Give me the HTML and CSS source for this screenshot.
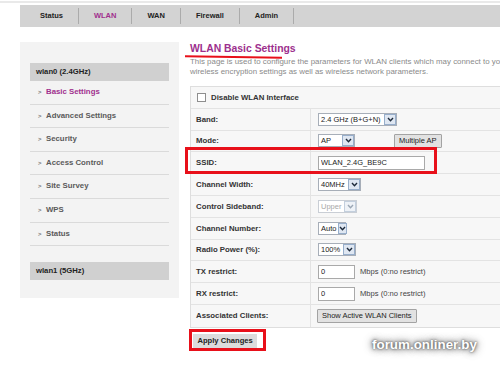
FILE: index.html
```html
<!DOCTYPE html>
<html lang="en">
<head>
    <meta charset="UTF-8">
    <meta name="viewport" content="width=device-width, initial-scale=1.0">
    <title>WLAN Basic Settings</title>
    <link rel="stylesheet" href="styles.css">
</head>
<body>
    <div class="topline"></div>
    <div class="page">
        <div class="nav">
            <a class="nav-item">Status</a>
            <a class="nav-item current">WLAN</a>
            <a class="nav-item">WAN</a>
            <a class="nav-item">Firewall</a>
            <a class="nav-item">Admin</a>
        </div>
        <div class="layout">
            <aside class="sidebar">
                <div class="side-head">wlan0 (2.4GHz)</div>
                <ul class="side-menu">
                    <li class="active"><span class="chev">&gt;</span>Basic Settings</li>
                    <li><span class="chev">&gt;</span>Advanced Settings</li>
                    <li><span class="chev">&gt;</span>Security</li>
                    <li><span class="chev">&gt;</span>Access Control</li>
                    <li><span class="chev">&gt;</span>Site Survey</li>
                    <li><span class="chev">&gt;</span>WPS</li>
                    <li><span class="chev">&gt;</span>Status</li>
                </ul>
                <div class="side-head side-gap">wlan1 (5GHz)</div>
            </aside>
            <main class="content">
                <h1>WLAN Basic Settings</h1>
                <p class="intro">This page is used to configure the parameters for WLAN clients which may connect to your<br>wireless encryption settings as well as wireless network parameters.</p>
                <table class="settings">
                    <tr>
                        <td colspan="2" class="label full"><span class="check"></span>Disable WLAN Interface</td>
                    </tr>
                    <tr>
                        <td class="label">Band:</td>
                        <td><span class="sel w-band"><span class="sel-val">2.4 GHz (B+G+N)</span><span class="sel-arr"><svg width="7" height="5" viewBox="0 0 7 5"><path d="M1 1 L3.5 3.8 L6 1" fill="none" stroke="#1d2a3a" stroke-width="1.4"/></svg></span></span></td>
                    </tr>
                    <tr>
                        <td class="label">Mode:</td>
                        <td><span class="sel w-mode"><span class="sel-val">AP</span><span class="sel-arr"><svg width="7" height="5" viewBox="0 0 7 5"><path d="M1 1 L3.5 3.8 L6 1" fill="none" stroke="#1d2a3a" stroke-width="1.4"/></svg></span></span><button class="btn multi">Multiple AP</button></td>
                    </tr>
                    <tr>
                        <td class="label">SSID:</td>
                        <td><input class="field w-ssid" type="text" value="WLAN_2.4G_BE9C"></td>
                    </tr>
                    <tr>
                        <td class="label">Channel Width:</td>
                        <td><span class="sel w-cw"><span class="sel-val">40MHz</span><span class="sel-arr"><svg width="7" height="5" viewBox="0 0 7 5"><path d="M1 1 L3.5 3.8 L6 1" fill="none" stroke="#1d2a3a" stroke-width="1.4"/></svg></span></span></td>
                    </tr>
                    <tr>
                        <td class="label">Control Sideband:</td>
                        <td><span class="sel w-cs disabled"><span class="sel-val">Upper</span><span class="sel-arr"><svg width="7" height="5" viewBox="0 0 7 5"><path d="M1 1 L3.5 3.8 L6 1" fill="none" stroke="#9aa6b4" stroke-width="1.4"/></svg></span></span></td>
                    </tr>
                    <tr>
                        <td class="label">Channel Number:</td>
                        <td><span class="sel w-cn"><span class="sel-val">Auto</span><span class="sel-arr"><svg width="7" height="5" viewBox="0 0 7 5"><path d="M1 1 L3.5 3.8 L6 1" fill="none" stroke="#1d2a3a" stroke-width="1.4"/></svg></span></span></td>
                    </tr>
                    <tr>
                        <td class="label">Radio Power (%):</td>
                        <td><span class="sel w-rp"><span class="sel-val">100%</span><span class="sel-arr"><svg width="7" height="5" viewBox="0 0 7 5"><path d="M1 1 L3.5 3.8 L6 1" fill="none" stroke="#1d2a3a" stroke-width="1.4"/></svg></span></span></td>
                    </tr>
                    <tr>
                        <td class="label">TX restrict:</td>
                        <td><input class="field w-rate" type="text" value="0"><span class="unit">Mbps (0:no restrict)</span></td>
                    </tr>
                    <tr>
                        <td class="label">RX restrict:</td>
                        <td><input class="field w-rate" type="text" value="0"><span class="unit">Mbps (0:no restrict)</span></td>
                    </tr>
                    <tr>
                        <td class="label">Associated Clients:</td>
                        <td><button class="btn clients">Show Active WLAN Clients</button></td>
                    </tr>
                </table>
                <button class="apply">Apply Changes</button>
            </main>
        </div>
    </div>

    <div class="mark-line"></div>
    <div class="mark mark-ssid"></div>
    <div class="mark mark-apply"></div>
    <div class="watermark">forum.onliner.by</div>
</body>
</html>
```

FILE: styles.css
```css
* {
    box-sizing: border-box;
}

body {
    margin: 0;
    width: 500px;
    height: 369px;
    overflow: hidden;
    position: relative;
    font-family: "Liberation Sans", Arial, sans-serif;
    background: #fff;
    color: #333;
}

.topline {
    height: 2px;
    margin: 1px 0 2px;
    background: #e9e9e9;
}

.page {
    width: 500px;
    padding-left: 20px;
    overflow: hidden;
}

.nav {
    display: flex;
    align-items: center;
    height: 22px;
    background: #d3d3d3;
}

.nav-item {
    padding: 0 15px;
    border-right: 1px solid #ababab;
    font-size: 7.5px;
    font-weight: bold;
    line-height: 16px;
    color: #222;
    text-decoration: none;
}

.nav-item:first-child {
    padding-left: 20px;
}

.nav-item.current {
    color: #a0308e;
}

.layout {
    display: flex;
    align-items: flex-start;
    margin-top: 15px;
}

.sidebar {
    flex: none;
    width: 159px;
    padding: 21px 10px 18px;
    background: #f3f3f3;
}

.side-head {
    height: 18px;
    line-height: 18px;
    padding-left: 6px;
    background: #d0d0d0;
    font-size: 7.7px;
    font-weight: bold;
    color: #222;
}

.side-gap {
    margin-top: 16px;
}

.side-menu {
    list-style: none;
    margin: 0;
    padding: 0;
}

.side-menu li {
    height: 23.6px;
    line-height: 22.6px;
    padding-left: 8px;
    border-bottom: 1px solid #dadada;
    font-size: 7.8px;
    font-weight: bold;
    color: #5a5a5a;
}

.side-menu li.active {
    color: #a0308e;
}

.chev {
    display: inline-block;
    width: 8px;
    font-size: 6px;
    color: #777;
}

.content {
    flex: none;
    width: 340px;
    margin-left: 11px;
}

h1 {
    margin: 0;
    font-size: 10.4px;
    line-height: 13px;
    color: #9d2f8d;
}

.intro {
    margin: 2px 0 0;
    font-size: 7.9px;
    line-height: 10px;
    color: #8a8a8a;
    white-space: nowrap;
}

.settings {
    width: 340px;
    margin-top: 9px;
    border-collapse: separate;
    border-spacing: 0;
    border: 1px solid #dedede;
    background: #f7f7f7;
    font-size: 7.8px;
}

.settings td {
    height: 21.8px;
    padding: 0 0 0 7px;
    border-bottom: 1px solid #e3e3e3;
    vertical-align: middle;
    white-space: nowrap;
}

.settings tr:last-child td {
    border-bottom: none;
}

.settings .label {
    width: 120px;
    padding-left: 5px;
    border-right: 1px solid #e3e3e3;
    font-weight: bold;
    color: #333;
}

.settings .label.full {
    border-right: none;
    padding-left: 6px;
}

.check {
    display: inline-block;
    width: 9px;
    height: 9px;
    margin-right: 5px;
    vertical-align: middle;
    border: 1px solid #8e8e8e;
    background: #fff;
}

.sel {
    display: inline-flex;
    vertical-align: middle;
    height: 13px;
    border: 1px solid #a7aeb8;
    background: #fff;
}

.sel-val {
    flex: 1;
    padding: 0 2px;
    font-size: 7.5px;
    line-height: 11px;
    color: #222;
}

.sel-arr {
    display: flex;
    align-items: center;
    justify-content: center;
    width: 12px;
    border: 1px solid #97aecb;
    background: #dfe7f2;
}

.sel.disabled {
    border-color: #c9ced5;
}

.sel.disabled .sel-val {
    color: #a8a8a8;
}

.sel.disabled .sel-arr {
    border-color: #c3cfdd;
    background: #eef2f7;
}

.w-band { width: 79px; }
.w-mode { width: 37px; }
.w-cw { width: 43px; }
.w-cs { width: 39px; }
.w-cn { width: 28px; }
.w-rp { width: 38px; }

.field {
    vertical-align: middle;
    height: 14px;
    margin: 0;
    padding: 0 2px;
    border: 1px solid #a9a9a9;
    background: #fff;
    font-family: inherit;
    font-size: 7.5px;
    color: #222;
}

.w-ssid { width: 107px; }
.w-rate { width: 37px; }

.unit {
    margin-left: 5px;
    vertical-align: middle;
    font-size: 7.6px;
    color: #444;
}

.btn {
    vertical-align: middle;
    height: 14px;
    margin: 0;
    padding: 0 4px;
    border: 1px solid #a3a3a3;
    border-radius: 1px;
    background: #e2e2e2;
    font-family: inherit;
    font-size: 7.5px;
    line-height: 12px;
    color: #222;
}

.multi {
    margin-left: 39px;
}

.clients {
    margin-left: -1px;
}

.apply {
    display: block;
    height: 14px;
    margin: 6px 0 0 3px;
    padding: 0 4.5px;
    border: none;
    background: #dcdcdc;
    font-family: inherit;
    font-size: 7.6px;
    font-weight: bold;
    color: #222;
}

/* red annotations drawn over the screenshot */
.mark {
    position: absolute;
    border: 3px solid #e8101a;
}

.mark-ssid {
    left: 185px;
    top: 147px;
    width: 252px;
    height: 27px;
}

.mark-apply {
    left: 189px;
    top: 329px;
    width: 77px;
    height: 22px;
}

.mark-line {
    position: absolute;
    left: 185px;
    top: 56px;
    width: 97px;
    height: 2px;
    background: #e8101a;
    transform: rotate(1deg);
}

.watermark {
    position: absolute;
    left: 372px;
    top: 337px;
    font-size: 13.4px;
    font-weight: bold;
    color: #fff;
    text-shadow: 0 0 2px #555, 0 0 4px #666, 0 0 8px #888, 0 0 12px #bbb;
}
```
